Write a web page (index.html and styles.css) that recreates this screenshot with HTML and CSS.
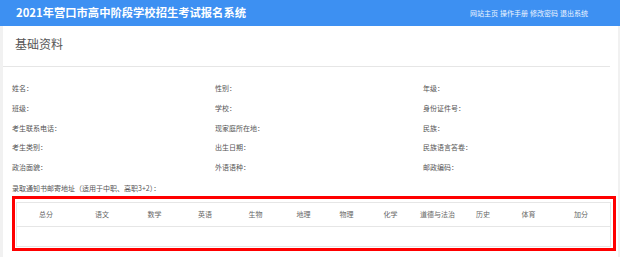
FILE: index.html
```html
<!DOCTYPE html>
<html lang="zh-CN">
<head>
<meta charset="UTF-8">
<meta name="viewport" content="width=device-width, initial-scale=1.0">
<title>2021年营口市高中阶段学校招生考试报名系统</title>
<link rel="stylesheet" href="styles.css">
</head>
<body>

<header class="topbar">
  <h1 class="site-title">2021年营口市高中阶段学校招生考试报名系统</h1>
  <nav class="top-links">
    <a href="#">网站主页</a>
    <a href="#">操作手册</a>
    <a href="#">修改密码</a>
    <a href="#">退出系统</a>
  </nav>
</header>

<main class="card">
  <div class="card-head">基础资料</div>

  <div class="info-grid">
    <div class="info-item">姓名：</div>
    <div class="info-item">性别：</div>
    <div class="info-item">年级：</div>

    <div class="info-item">班级：</div>
    <div class="info-item">学校：</div>
    <div class="info-item">身份证件号：</div>

    <div class="info-item">考生联系电话：</div>
    <div class="info-item">现家庭所在地：</div>
    <div class="info-item">民族：</div>

    <div class="info-item">考生类别：</div>
    <div class="info-item">出生日期：</div>
    <div class="info-item">民族语言答卷：</div>

    <div class="info-item">政治面貌：</div>
    <div class="info-item">外语语种：</div>
    <div class="info-item">邮政编码：</div>

    <div class="info-item wide">录取通知书邮寄地址（适用于中职、高职3+2）：</div>
  </div>

  <div class="score-box">
    <table class="score-table">
      <thead>
        <tr>
          <th>总分</th>
          <th>语文</th>
          <th>数学</th>
          <th>英语</th>
          <th>生物</th>
          <th>地理</th>
          <th>物理</th>
          <th>化学</th>
          <th>道德与法治</th>
          <th>历史</th>
          <th>体育</th>
          <th>加分</th>
        </tr>
      </thead>
      <tbody>
        <tr>
          <td></td><td></td><td></td><td></td><td></td><td></td>
          <td></td><td></td><td></td><td></td><td></td><td></td>
        </tr>
      </tbody>
    </table>
  </div>
</main>

</body>
</html>
```

FILE: styles.css
```css
body {
  margin: 0;
  background: #f1f1f1;
  font-family: "Noto Sans CJK SC", "Noto Sans", sans-serif;
  color: #555;
  height: 257px;
  overflow: hidden;
}

/* ===== Top bar ===== */
.topbar {
  height: 26px;
  background: #3d90f2;
  display: flex;
  align-items: center;
  justify-content: space-between;
  padding: 0 32px 0 16px;
}
.site-title {
  margin: 0;
  font-size: 11.3px;
  font-weight: bold;
  color: #fff;
  line-height: 1;
}
.top-links { display: flex; gap: 2px; }
.top-links a {
  color: #eef5ff;
  text-decoration: none;
  font-size: 7px;
  line-height: 1;
}

/* ===== Card ===== */
.card {
  background: #fff;
  margin: 0 2px 0 3px;
  height: 231px;
}
.card-head {
  height: 40px;
  line-height: 36px;
  font-size: 12px;
  padding-left: 12px;
  margin-right: 8px;
  border-bottom: 1.5px solid #e6e6e6;
  color: #555;
}

.info-grid {
  display: grid;
  grid-template-columns: 203px 208px 1fr;
  padding: 12px 0 0 9px;
}
.info-item {
  height: 19.8px;
  line-height: 19.8px;
  font-size: 7px;
  color: #555;
}
.info-item.wide {
  grid-column: 1 / -1;
  height: 16px;
  line-height: 16px;
  padding-top: 2px;
}

/* ===== Score table ===== */
.score-box {
  margin: 0 2px 0 9px;
  border: 3px solid #f00;
  padding: 3px 4px 1px 1px;
}
.score-table {
  width: 100%;
  table-layout: fixed;
  border-collapse: collapse;
  border: 1px solid #e6e6e6;
  font-size: 7px;
  color: #666;
}
.score-table th {
  font-weight: normal;
  height: 23px;
  border-bottom: 1px solid #e6e6e6;
  text-align: center;
  padding: 0;
}
.score-table td { height: 19px; padding: 0; }

.score-table th:nth-child(1) { width: 58px; }
.score-table th:nth-child(2) { width: 54px; }
.score-table th:nth-child(3) { width: 51px; }
.score-table th:nth-child(4) { width: 50px; }
.score-table th:nth-child(5) { width: 51px; }
.score-table th:nth-child(6) { width: 45px; }
.score-table th:nth-child(7) { width: 41px; }
.score-table th:nth-child(8) { width: 47px; }
.score-table th:nth-child(9) { width: 47px; }
.score-table th:nth-child(10) { width: 44px; }
.score-table th:nth-child(11) { width: 47px; }
.score-table th:nth-child(12) { width: 58px; }
```
